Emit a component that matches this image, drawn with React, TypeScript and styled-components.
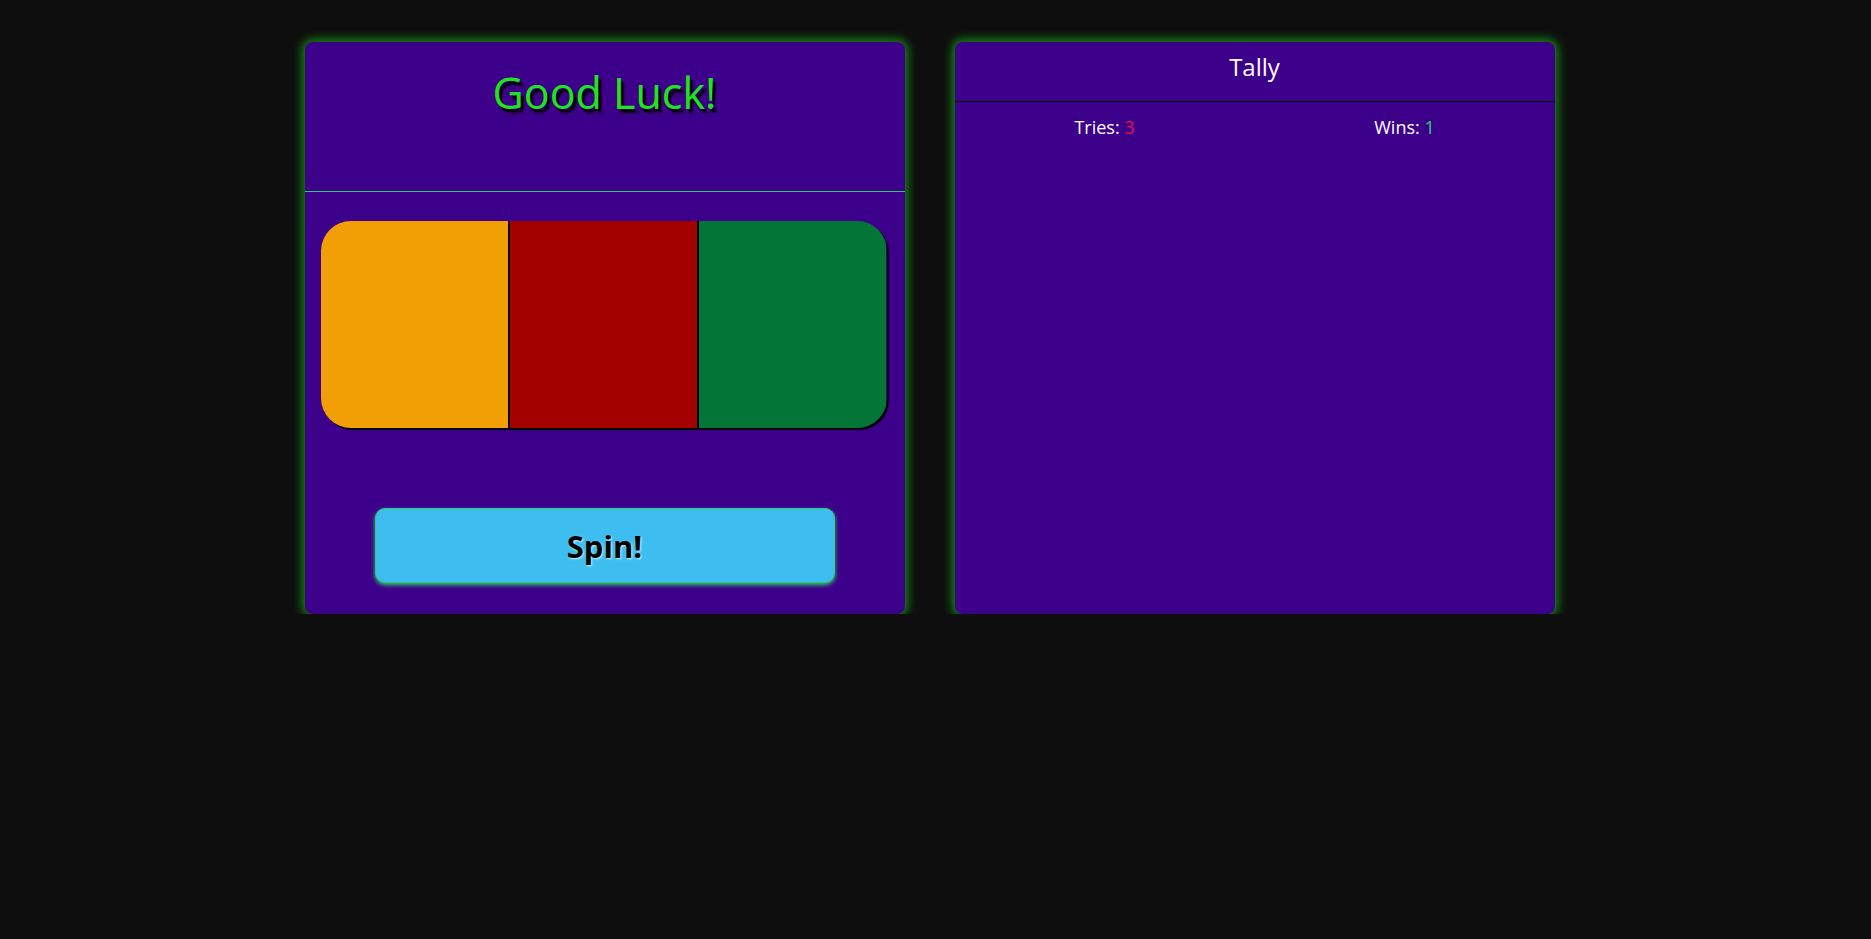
import React from 'react'
import styled, { createGlobalStyle } from 'styled-components'

const GlobalStyle = createGlobalStyle`
  body {
    margin: 0;
    background: #0e0e0e;
    font-family: 'Open Sans', 'Noto Sans', sans-serif;
  }
`

const Page = styled.main`
  display: flex;
  justify-content: center;
  gap: 50px;
  padding: 42px 12px 0 0;
`

const Card = styled.section`
  width: 600px;
  height: 572px;
  box-sizing: border-box;
  background: #3c008a;
  border-radius: 8px;
  box-shadow: 0 0 10px 3px rgba(25, 165, 25, 0.8);
  display: flex;
  flex-direction: column;
`

const MachineHeader = styled.header`
  height: 149px;
  border-bottom: 1px solid #2ecc71;
  text-align: center;
`

const Title = styled.h1`
  margin: 0;
  padding-top: 19px;
  font-size: 43px;
  font-weight: 400;
  line-height: 1.5;
  color: #1fe51f;
  text-shadow: 3px 4px 2px #000;
`

const Reels = styled.div`
  margin: 29px 18px 0 16px;
  height: 207px;
  display: flex;
  border-radius: 30px;
  overflow: hidden;
  box-shadow: 2px 2px 1px #000;
`

const Reel = styled.div<{ $color: string; $first?: boolean }>`
  flex: 1;
  background: ${(p) => p.$color};
  border-left: ${(p) => (p.$first ? 'none' : '2px solid #000')};
`

const SpinButton = styled.button`
  margin: 80px auto 0;
  width: 460px;
  height: 75px;
  border: 1px solid #2ecc71;
  border-radius: 10px;
  background: #3ebef0;
  box-shadow: 0 2px 4px #2ecc71;
  font-family: 'Open Sans', 'Noto Sans', sans-serif;
  font-size: 31px;
  font-weight: 700;
  color: #000;
  text-shadow: 1px 1px 2px #d8f4ff;
  cursor: pointer;
`

const TallyHeader = styled.header`
  height: 60px;
  box-sizing: border-box;
  border-bottom: 1px solid #000;
  padding-top: 9px;
  text-align: center;
`

const TallyTitle = styled.h2`
  margin: 0;
  font-size: 24px;
  font-weight: 400;
  line-height: 32px;
  color: #fff;
`

const Stats = styled.div`
  display: grid;
  grid-template-columns: 1fr 1fr;
  padding-top: 12px;
`

const Stat = styled.div`
  text-align: center;
  color: #fff;
  font-size: 18px;
  line-height: 26px;
`

const Count = styled.span<{ $color: string }>`
  color: ${(p) => p.$color};
`

const reels = ['#f29e05', '#a30000', '#037536']

export default function App() {
  return (
    <>
      <GlobalStyle />
      <Page>
        <Card>
          <MachineHeader>
            <Title>Good Luck!</Title>
          </MachineHeader>
          <Reels>
            {reels.map((c, i) => (
              <Reel key={c} $color={c} $first={i === 0} />
            ))}
          </Reels>
          <SpinButton type='button'>Spin!</SpinButton>
        </Card>
        <Card>
          <TallyHeader>
            <TallyTitle>Tally</TallyTitle>
          </TallyHeader>
          <Stats>
            <Stat>
              Tries: <Count $color='#e0134a'>3</Count>
            </Stat>
            <Stat>
              Wins: <Count $color='#2ecc71'>1</Count>
            </Stat>
          </Stats>
        </Card>
      </Page>
    </>
  )
}
